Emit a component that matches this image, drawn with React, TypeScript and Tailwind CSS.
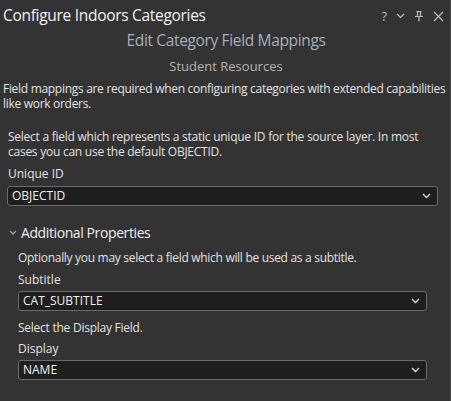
import React from "react";

function Chevron({ className = "" }: { className?: string }) {
  return (
    <svg width="9" height="6" viewBox="0 0 9 6" className={className}>
      <path d="M1 1 L4.5 4.5 L8 1" fill="none" stroke="#d8d8d8" strokeWidth="1.4" />
    </svg>
  );
}

function Select({ value, className = "" }: { value: string; className?: string }) {
  return (
    <div
      className={`flex items-center justify-between h-[20px] rounded-[3px] border border-[#6b6b6b] bg-[#1e1e1e] pl-[4px] pr-[6px] ${className}`}
    >
      <span className="text-[12px] leading-none text-[#f0f0f0]">{value}</span>
      <Chevron />
    </div>
  );
}

export default function App() {
  return (
    <div
      className="w-[451px] h-[401px] overflow-hidden bg-[#333333] text-[#e2e2e2] border-r border-[#484848] flex flex-col"
      style={{ fontFamily: '"Open Sans", "Noto Sans", sans-serif' }}
    >
      <div className="flex items-center justify-between h-[30px] mt-[1px] pl-[3px] pr-[6px] shrink-0">
        <span className="text-[15.5px] tracking-[-0.3px] text-[#f2f2f2]">Configure Indoors Categories</span>
        <div className="flex items-center gap-[9px] text-[#bdbdbd]">
          <span className="text-[13px] leading-none">?</span>
          <svg width="9" height="6" viewBox="0 0 9 6">
            <path d="M1 1 L4.5 4.5 L8 1" fill="none" stroke="#bdbdbd" strokeWidth="1.2" />
          </svg>
          <svg width="10" height="12" viewBox="0 0 10 12">
            <path d="M2.5 1.5 H7.5 M3.5 1.5 V6.5 M6.5 1.5 V6.5 M1 6.5 H9 M5 6.5 V11.5" fill="none" stroke="#bdbdbd" strokeWidth="1.2" />
          </svg>
          <svg width="11" height="11" viewBox="0 0 11 11">
            <path d="M1 1 L10 10 M10 1 L1 10" fill="none" stroke="#bdbdbd" strokeWidth="1.2" />
          </svg>
        </div>
      </div>
      <div className="text-center text-[15.5px] leading-[18px] text-[#a5b0bd] tracking-[-0.35px] pl-[2px] shrink-0">
        Edit Category Field Mappings
      </div>
      <div className="text-center text-[13px] leading-[20px] text-[#b4b4b4] mt-[7px] pl-[2px] shrink-0">
        Student Resources
      </div>
      <p className="text-[12px] leading-[15px] pl-[3px] mt-[5px] tracking-[-0.3px] shrink-0">
        Field mappings are required when configuring categories with extended capabilities like work orders.
      </p>
      <p className="text-[12px] leading-[15px] pl-[8px] pr-[20px] mt-[18px] tracking-[-0.25px] shrink-0">
        Select a field which represents a static unique ID for the source layer. In most cases you can use the default OBJECTID.
      </p>
      <div className="text-[12px] leading-[15px] pl-[8px] mt-[7px] shrink-0">Unique ID</div>
      <Select value="OBJECTID" className="ml-[7px] mr-[12px] mt-[5px] shrink-0" />
      <div className="flex items-center mt-[18px] pl-[9px] gap-[4px] shrink-0">
        <svg width="8" height="6" viewBox="0 0 8 6">
          <path d="M1 1 L4 4 L7 1" fill="none" stroke="#a0a0a0" strokeWidth="1.3" />
        </svg>
        <span className="text-[14px] leading-[18px] text-[#ededed] font-normal tracking-[-0.4px]">Additional Properties</span>
      </div>
      <div className="text-[12px] leading-[15px] pl-[18px] mt-[8px] tracking-[-0.3px] shrink-0">
        Optionally you may select a field which will be used as a subtitle.
      </div>
      <div className="text-[12px] leading-[15px] pl-[18px] mt-[7px] shrink-0">Subtitle</div>
      <Select value="CAT_SUBTITLE" className="ml-[18px] mr-[23px] mt-[4px] shrink-0" />
      <div className="text-[12px] leading-[15px] pl-[18px] mt-[9px] tracking-[-0.25px] shrink-0">Select the Display Field.</div>
      <div className="text-[12px] leading-[15px] pl-[18px] mt-[6px] shrink-0">Display</div>
      <Select value="NAME" className="ml-[18px] mr-[23px] mt-[4px] shrink-0" />
      <div className="flex items-center mt-[20px] pl-[9px] gap-[4px] shrink-0">
        <svg width="8" height="6" viewBox="0 0 8 6">
          <path d="M1 1 L4 4 L7 1" fill="none" stroke="#a0a0a0" strokeWidth="1.3" />
        </svg>
        <span className="text-[14px] leading-[18px] text-[#ededed] font-normal tracking-[-0.4px]">Location Properties</span>
      </div>
    </div>
  );
}
